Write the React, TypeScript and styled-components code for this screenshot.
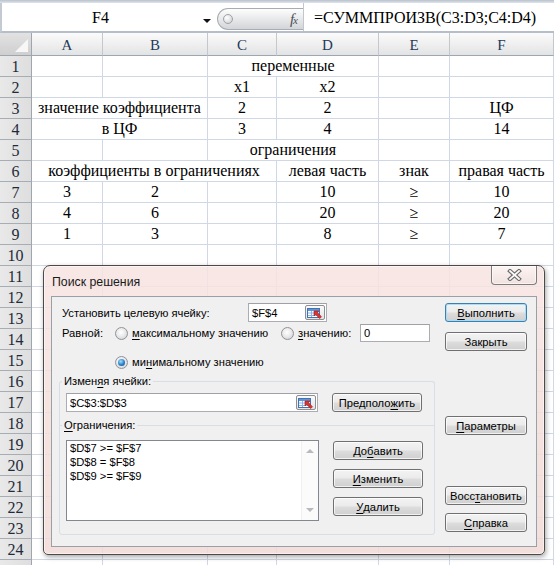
import React from "react";
import styled, { createGlobalStyle, css } from "styled-components";

const GlobalStyle = createGlobalStyle`
  html, body {
    margin: 0;
    padding: 0;
    background: #fff;
  }
  body {
    overflow: hidden;
  }
`;

const Screen = styled.div`
  position: relative;
  width: 554px;
  height: 565px;
  overflow: hidden;
  background: #fff;
  font-family: "Liberation Serif", "Times New Roman", serif;
`;

const RibbonEdge = styled.div`
  height: 3px;
  background: linear-gradient(#b9c2cd, #dfe4ea);
`;

/* ---------- formula bar ---------- */

const FormulaBar = styled.div`
  display: flex;
  height: 28px;
  background: #fff;
  border-left: 2px solid #c4cad2;
  border-bottom: 2px solid #b5bec9;
`;

const NameBox = styled.div`
  position: relative;
  width: 213px;
  font-size: 16px;
  line-height: 30px;
  text-align: center;
  color: #000;
  padding-right: 16px;
  box-sizing: border-box;
`;

const DropArrow = styled.span`
  position: absolute;
  right: 4px;
  top: 16px;
  width: 0;
  height: 0;
  border-left: 4px solid transparent;
  border-right: 4px solid transparent;
  border-top: 4px solid #111;
`;

const Capsule = styled.div`
  display: flex;
  align-items: center;
  justify-content: space-between;
  width: 86px;
  height: 22px;
  margin-top: 5px;
  margin-left: 2px;
  padding: 0 6px 0 5px;
  box-sizing: border-box;
  border: 1px solid #a9adb3;
  border-right: none;
  border-radius: 12px 0 0 12px;
  background: linear-gradient(#fdfdfd, #e6e7e9 55%, #d3d5d8);
`;

const Knob = styled.span`
  width: 8px;
  height: 8px;
  border-radius: 50%;
  border: 1px solid #9da2a8;
  background: radial-gradient(circle at 35% 35%, #ffffff, #c9ccd0);
`;

const Fx = styled.span`
  font-family: "Liberation Serif", serif;
  font-style: italic;
  font-size: 15px;
  color: #4b4f55;
  letter-spacing: -1px;

  small {
    font-size: 11px;
  }
`;

const FormulaText = styled.div`
  flex: 1;
  border-left: 1px solid #c2c7ce;
  padding-left: 10px;
  font-size: 16px;
  line-height: 30px;
  color: #000;
  white-space: nowrap;
`;

/* ---------- sheet ---------- */

const Sheet = styled.div`
  display: grid;
  grid-template-columns: 32px 71px 105px 69px 102px 71px 104px;
  grid-template-rows: 23px;
  grid-auto-rows: 21px;
`;

const Corner = styled.div`
  position: relative;
  box-sizing: border-box;
  border-right: 1px solid #9ea6b0;
  border-bottom: 1px solid #9ea6b0;
  background: linear-gradient(#e2e2e2, #cfcfcf);

  &::after {
    content: "";
    position: absolute;
    right: 3px;
    bottom: 3px;
    border-left: 13px solid transparent;
    border-bottom: 13px solid #f7f7f7;
  }
`;

const ColHead = styled.div`
  box-sizing: border-box;
  border-right: 1px solid #c4c8cd;
  border-bottom: 1px solid #9ea6b0;
  background: linear-gradient(#fbfbfb, #eeeeee 55%, #e2e3e5);
  color: #1e3a5a;
  font-size: 15px;
  line-height: 24px;
  text-align: center;
`;

const RowHead = styled.div`
  box-sizing: border-box;
  border-right: 1px solid #9ea6b0;
  border-bottom: 1px solid #a6adb5;
  background: linear-gradient(90deg, #e9e9e9, #dedede);
  color: #1c2a3a;
  font-size: 16px;
  line-height: 21px;
  text-align: center;
`;

const Cell = styled.div<{ $span?: number }>`
  box-sizing: border-box;
  grid-column: span ${(p) => p.$span ?? 1};
  border-right: 1px solid #d0d7e5;
  border-bottom: 1px solid #d0d7e5;
  font-size: 16px;
  line-height: 20px;
  text-align: center;
  white-space: nowrap;
  color: #000;
`;

type CellDef = { col: number; span?: number; text: string };

const COLS = ["A", "B", "C", "D", "E", "F"];

const DATA: Record<number, CellDef[]> = {
  1: [{ col: 2, span: 2, text: "переменные" }],
  2: [
    { col: 2, text: "x1" },
    { col: 3, text: "x2" },
  ],
  3: [
    { col: 0, span: 2, text: "значение коэффициента" },
    { col: 2, text: "2" },
    { col: 3, text: "2" },
    { col: 5, text: "ЦФ" },
  ],
  4: [
    { col: 0, span: 2, text: "в ЦФ" },
    { col: 2, text: "3" },
    { col: 3, text: "4" },
    { col: 5, text: "14" },
  ],
  5: [{ col: 2, span: 2, text: "ограничения" }],
  6: [
    { col: 0, span: 3, text: "коэффициенты в ограничениях" },
    { col: 3, text: "левая часть" },
    { col: 4, text: "знак" },
    { col: 5, text: "правая часть" },
  ],
  7: [
    { col: 0, text: "3" },
    { col: 1, text: "2" },
    { col: 3, text: "10" },
    { col: 4, text: "≥" },
    { col: 5, text: "10" },
  ],
  8: [
    { col: 0, text: "4" },
    { col: 1, text: "6" },
    { col: 3, text: "20" },
    { col: 4, text: "≥" },
    { col: 5, text: "20" },
  ],
  9: [
    { col: 0, text: "1" },
    { col: 1, text: "3" },
    { col: 3, text: "8" },
    { col: 4, text: "≥" },
    { col: 5, text: "7" },
  ],
};

// the last row is only a sliver at the bottom edge, its number is not visible
const VISIBLE_ROWS = 24;

function SheetRow({ n }: { n: number }) {
  const defs = DATA[n] ?? [];
  const cells: React.ReactNode[] = [];
  let c = 0;
  while (c < COLS.length) {
    const d = defs.find((x) => x.col === c);
    if (d) {
      cells.push(
        <Cell key={c} $span={d.span}>
          {d.text}
        </Cell>
      );
      c += d.span ?? 1;
    } else {
      cells.push(<Cell key={c} />);
      c += 1;
    }
  }
  return (
    <>
      <RowHead>{n <= VISIBLE_ROWS ? n : ""}</RowHead>
      {cells}
    </>
  );
}

/* ---------- dialog ---------- */

const Dialog = styled.div`
  position: absolute;
  left: 43px;
  top: 265px;
  width: 502px;
  height: 290px;
  box-sizing: border-box;
  display: flex;
  flex-direction: column;
  padding: 0 7px 7px 7px;
  border: 1px solid #4a4a4a;
  border-radius: 7px 7px 5px 5px;
  background: linear-gradient(rgba(247, 228, 225, 0.86), rgba(241, 217, 213, 0.86));
  box-shadow: 1px 2px 5px rgba(0, 0, 0, 0.35), inset 0 0 0 1px rgba(255, 255, 255, 0.55);
  font-family: "Liberation Sans", Arial, sans-serif;
  font-size: 11.2px;
  color: #000;
`;

const TitleBar = styled.div`
  display: flex;
  justify-content: space-between;
  align-items: flex-start;
  height: 30px;
`;

const Title = styled.div`
  margin: 9px 0 0 1px;
  font-size: 12.3px;
  line-height: 14px;
  color: #1a1a1a;
`;

const CloseButton = styled.div`
  display: flex;
  align-items: center;
  justify-content: center;
  width: 46px;
  height: 19px;
  box-sizing: border-box;
  border: 1px solid #7c7c7c;
  border-top: none;
  border-radius: 0 0 4px 4px;
  background: linear-gradient(rgba(255, 255, 255, 0.55), rgba(236, 222, 219, 0.6));
  box-shadow: inset 0 0 0 1px rgba(255, 255, 255, 0.6);
`;

const Client = styled.div`
  flex: 1;
  display: flex;
  padding: 6px 9px 0 7px;
  border: 1px solid #98a0a8;
  background: #f0f0f0;
`;

const LeftPane = styled.div`
  width: 376px;
  display: flex;
  flex-direction: column;
`;

const RightPane = styled.div`
  width: 82px;
  margin-left: 10px;
  display: flex;
  flex-direction: column;
`;

const Line = styled.div<{ $mt?: number; $ml?: number; $h?: number }>`
  display: flex;
  align-items: center;
  height: ${(p) => p.$h ?? 19}px;
  margin-top: ${(p) => p.$mt ?? 0}px;
  margin-left: ${(p) => p.$ml ?? 0}px;
`;

const Label = styled.span<{ $w?: number }>`
  white-space: nowrap;
  ${(p) =>
    p.$w &&
    css`
      width: ${p.$w}px;
      flex: none;
    `}
`;

const Option = styled.span<{ $w?: number }>`
  display: flex;
  align-items: center;
  gap: 4px;
  white-space: nowrap;
  ${(p) =>
    p.$w &&
    css`
      width: ${p.$w}px;
      flex: none;
    `}
`;

const Key = styled.u`
  text-decoration: underline;
  text-underline-offset: 2px;
`;

const Radio = styled.span<{ $checked?: boolean }>`
  position: relative;
  flex: none;
  width: 13px;
  height: 13px;
  box-sizing: border-box;
  border-radius: 50%;
  border: 1px solid #8f9398;
  background: radial-gradient(circle at 45% 40%, #ffffff 0%, #ebebeb 45%, #c8cacc 100%);

  ${(p) =>
    p.$checked &&
    css`
      &::after {
        content: "";
        position: absolute;
        left: 2px;
        top: 2px;
        width: 7px;
        height: 7px;
        border-radius: 50%;
        background: radial-gradient(circle at 40% 35%, #9fe0ff 0%, #2a7fc9 55%, #0c3f7f 100%);
      }
    `}
`;

const Field = styled.div<{ $w: number; $h?: number }>`
  display: flex;
  align-items: center;
  width: ${(p) => p.$w}px;
  height: ${(p) => p.$h ?? 19}px;
  flex: none;
  box-sizing: border-box;
  padding-left: 3px;
  border: 1px solid #abadb3;
  border-top-color: #9ea1a7;
  background: #fff;
  white-space: nowrap;
`;

const RefButton = styled.span`
  display: flex;
  align-items: center;
  justify-content: center;
  margin-left: auto;
  margin-right: 1px;
  width: 20px;
  height: 15px;
  box-sizing: border-box;
  border: 1px solid #8c8f94;
  border-radius: 2px;
  background: linear-gradient(#fafafa, #e4e4e4);
`;

const Button = styled.div<{ $w?: number; $default?: boolean; $mt?: number }>`
  display: flex;
  align-items: center;
  justify-content: center;
  flex: none;
  width: ${(p) => p.$w ?? 82}px;
  height: 19px;
  margin-top: ${(p) => p.$mt ?? 0}px;
  box-sizing: border-box;
  border: 1px solid ${(p) => (p.$default ? "#3c7fb1" : "#707070")};
  border-radius: 3px;
  background: linear-gradient(#f3f3f3 0%, #ebebeb 48%, #dddddd 52%, #cfcfcf 100%);
  box-shadow: inset 0 0 0 1px
    ${(p) => (p.$default ? "rgba(160, 220, 248, 0.9)" : "rgba(255, 255, 255, 0.7)")};
  white-space: nowrap;
`;

const Group = styled.fieldset<{ $first?: boolean }>`
  margin: ${(p) => (p.$first ? "4px 0 0 0" : "-8px 0 0 0")};
  padding: ${(p) => (p.$first ? "5px 12px 14px 6px" : "8px 12px 13px 6px")};
  border: 1px solid #d5dfe5;
  ${(p) =>
    p.$first
      ? css`
          border-bottom: none;
          border-radius: 3px 3px 0 0;
        `
      : css`
          border-radius: 0 0 3px 3px;
        `}
  min-width: 0;
  box-sizing: border-box;
  width: 376px;
`;

const Legend = styled.legend`
  margin-left: -4px;
  padding: 0 2px;
  line-height: 14px;
  white-space: nowrap;
`;

const GroupRow = styled.div`
  display: flex;
  align-items: flex-start;
  gap: 14px;
`;

const ListBox = styled.div`
  display: flex;
  width: 253px;
  height: 81px;
  flex: none;
  box-sizing: border-box;
  border: 1px solid #828790;
  background: #fff;
`;

const ListLines = styled.div`
  flex: 1;
  padding: 0 3px;
  line-height: 14px;
  white-space: nowrap;
`;

const ScrollTrack = styled.div`
  width: 16px;
  display: flex;
  flex-direction: column;
  align-items: center;
  justify-content: space-between;
  padding: 8px 0 8px;
  border-left: 1px solid #f0f0f0;
  background: #fbfbfb;
`;

const Arrow = styled.span<{ $down?: boolean }>`
  width: 0;
  height: 0;
  border-left: 4px solid transparent;
  border-right: 4px solid transparent;
  ${(p) =>
    p.$down
      ? css`
          border-top: 4px solid #b7b9bc;
        `
      : css`
          border-bottom: 4px solid #b7b9bc;
        `}
`;

const ButtonStack = styled.div`
  display: flex;
  flex-direction: column;
  gap: 9px;
  padding-top: 1px;
`;

function RefIcon() {
  return (
    <svg width="16" height="12" viewBox="0 0 16 12">
      <rect x="0.5" y="1.5" width="12" height="9" fill="#fff" stroke="#3f73b5" />
      <rect x="1" y="2" width="11" height="2" fill="#5f95d8" />
      <line x1="1" y1="6" x2="12" y2="6" stroke="#8fb2e0" />
      <line x1="1" y1="8.5" x2="12" y2="8.5" stroke="#8fb2e0" />
      <line x1="4.5" y1="4" x2="4.5" y2="10" stroke="#8fb2e0" />
      <path d="M7 4 L12 4 L10.4 5.6 L14.5 9.7 L12.7 11.5 L8.6 7.4 L7 9 Z" fill="#e0322c" stroke="#9b1712" strokeWidth="0.6" />
    </svg>
  );
}

function CloseGlyph() {
  return (
    <svg width="15" height="12" viewBox="0 0 15 12">
      <path d="M3 2 L12 10 M12 2 L3 10" stroke="#6a6a6a" strokeWidth="4" strokeLinecap="square" />
      <path d="M3 2 L12 10 M12 2 L3 10" stroke="#fafafa" strokeWidth="1.8" strokeLinecap="square" />
    </svg>
  );
}

function SolverDialog() {
  return (
    <Dialog>
      <TitleBar>
        <Title>Поиск решения</Title>
        <CloseButton>
          <CloseGlyph />
        </CloseButton>
      </TitleBar>
      <Client>
        <LeftPane>
          <Line $ml={3}>
            <Label $w={186}>Установить целевую ячейку:</Label>
            <Field $w={79}>
              $F$4
              <RefButton>
                <RefIcon />
              </RefButton>
            </Field>
          </Line>
          <Line $ml={3} $mt={2} $h={18}>
            <Label $w={53}>Равной:</Label>
            <Option $w={166}>
              <Radio />
              <span>
                <Key>м</Key>аксимальному значению
              </span>
            </Option>
            <Option $w={79}>
              <Radio />
              <span>
                <Key>з</Key>начению:
              </span>
            </Option>
            <Field $w={70} $h={18}>
              0
            </Field>
          </Line>
          <Line $ml={56} $mt={12} $h={16}>
            <Option>
              <Radio $checked />
              <span>
                ми<Key>н</Key>имальному значению
              </span>
            </Option>
          </Line>
          <Group $first>
            <Legend>
              Измен<Key>я</Key>я ячейки:
            </Legend>
            <GroupRow>
              <Field $w={252}>
                $C$3:$D$3
                <RefButton>
                  <RefIcon />
                </RefButton>
              </Field>
              <Button $w={90}>
                Предполо<Key>ж</Key>ить
              </Button>
            </GroupRow>
          </Group>
          <Group>
            <Legend>
              <Key>О</Key>граничения:
            </Legend>
            <GroupRow>
              <ListBox>
                <ListLines>
                  <div>$D$7 &gt;= $F$7</div>
                  <div>$D$8 = $F$8</div>
                  <div>$D$9 &gt;= $F$9</div>
                </ListLines>
                <ScrollTrack>
                  <Arrow />
                  <Arrow $down />
                </ScrollTrack>
              </ListBox>
              <ButtonStack>
                <Button $w={90}>
                  До<Key>б</Key>авить
                </Button>
                <Button $w={90}>
                  <Key>И</Key>зменить
                </Button>
                <Button $w={90}>
                  <Key>У</Key>далить
                </Button>
              </ButtonStack>
            </GroupRow>
          </Group>
        </LeftPane>
        <RightPane>
          <Button $default>
            <Key>В</Key>ыполнить
          </Button>
          <Button $mt={10}>Закрыть</Button>
          <Button $mt={65}>
            <Key>П</Key>араметры
          </Button>
          <Button $mt={51}>
            Восс<Key>т</Key>ановить
          </Button>
          <Button $mt={8}>
            <Key>С</Key>правка
          </Button>
        </RightPane>
      </Client>
    </Dialog>
  );
}

export default function App() {
  const rowNumbers = Array.from({ length: 25 }, (_, i) => i + 1);
  return (
    <Screen>
      <GlobalStyle />
      <RibbonEdge />
      <FormulaBar>
        <NameBox>
          F4
          <DropArrow />
        </NameBox>
        <Capsule>
          <Knob />
          <Fx>
            f<small>x</small>
          </Fx>
        </Capsule>
        <FormulaText>=СУММПРОИЗВ(C3:D3;C4:D4)</FormulaText>
      </FormulaBar>
      <Sheet>
        <Corner />
        {COLS.map((c) => (
          <ColHead key={c}>{c}</ColHead>
        ))}
        {rowNumbers.map((n) => (
          <SheetRow key={n} n={n} />
        ))}
      </Sheet>
      <SolverDialog />
    </Screen>
  );
}
